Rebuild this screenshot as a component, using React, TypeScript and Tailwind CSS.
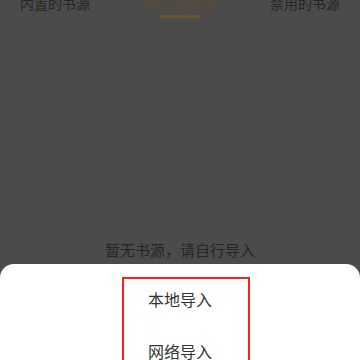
import React from "react";

export default function App() {
  const font = { fontFamily: '"Noto Sans CJK SC", "Noto Sans", sans-serif' };
  return (
    <div
      className="relative h-[360px] w-[360px] overflow-hidden bg-[#4b4b4b]"
      style={font}
    >
      <div className="-mt-[7px] flex justify-between px-[20px] text-[14px] leading-[20px]">
        <div className="text-[#262626]">内置的书源</div>
        <div className="flex flex-col items-center">
          <div className="text-[#5e4a2c]">导入的书源</div>
          <div className="mt-[2px] h-[3px] w-[40px] bg-[#6e5229]" />
        </div>
        <div className="text-[#262626]">禁用的书源</div>
      </div>
      <div className="mt-[222px] text-center text-[15px] leading-[20px] text-[#262626]">
        暂无书源，请自行导入
      </div>
      <div className="absolute left-0 top-[264px] h-[120px] w-full rounded-t-[14px] bg-white pt-[13px]">
        <div className="ml-[122px] h-[100px] w-[128px] border-2 border-[#ff1f1f]">
          <div className="flex flex-col gap-[32px] pl-[24px] pt-[10px] text-[16px] leading-[20px] text-[#333333]">
            <div>本地导入</div>
            <div>网络导入</div>
          </div>
        </div>
      </div>
    </div>
  );
}
